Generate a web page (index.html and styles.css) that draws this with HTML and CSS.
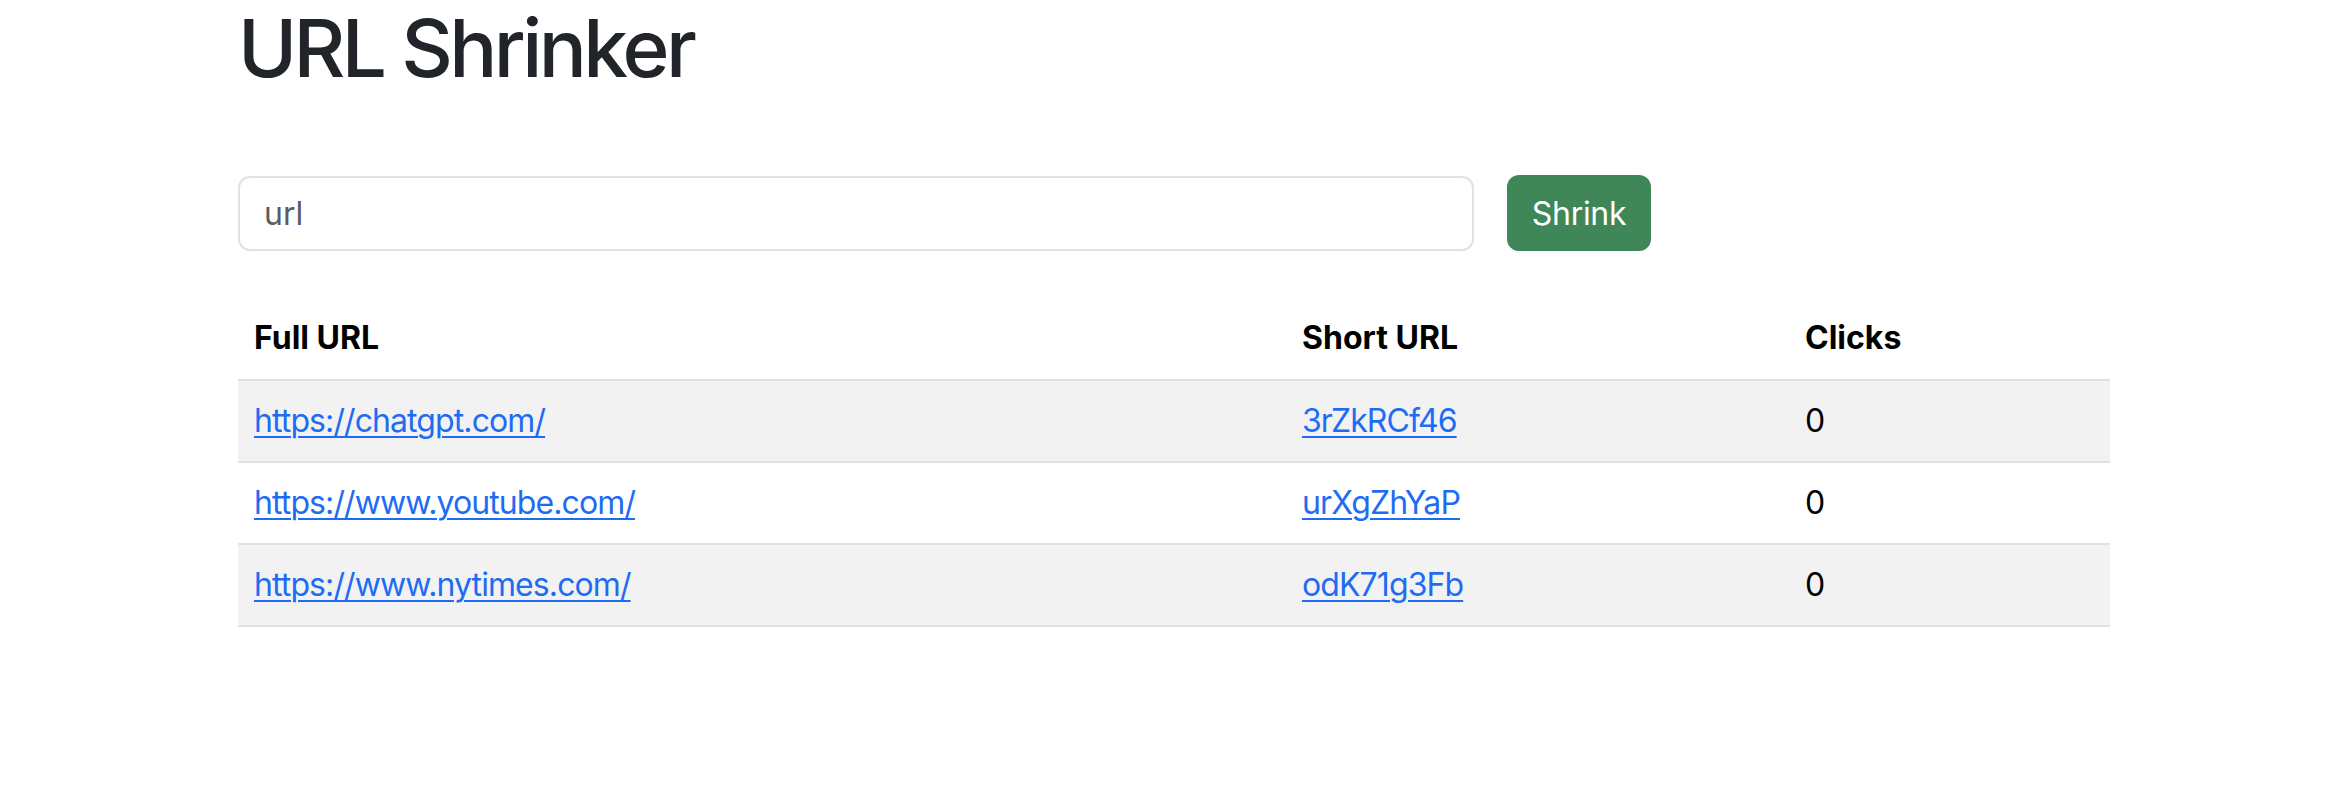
FILE: index.html
```html
<!DOCTYPE html>
<html lang="en">
<head>
<meta charset="utf-8">
<title>URL Shrinker</title>
<link rel="stylesheet" href="styles.css">
</head>
<body>
<div class="container">
  <h1 class="title">URL Shrinker</h1>
  <form class="shrink-form" action="#">
    <input class="url-input" type="url" name="fullUrl" placeholder="url">
    <button class="btn-shrink" type="submit">Shrink</button>
  </form>
  <table class="url-table">
    <colgroup>
      <col class="col-full">
      <col class="col-short">
      <col class="col-clicks">
    </colgroup>
    <thead>
      <tr>
        <th>Full URL</th>
        <th>Short URL</th>
        <th>Clicks</th>
      </tr>
    </thead>
    <tbody>
      <tr>
        <td><a href="#">https://chatgpt.com/</a></td>
        <td><a href="#">3rZkRCf46</a></td>
        <td>0</td>
      </tr>
      <tr>
        <td><a href="#">https://www.youtube.com/</a></td>
        <td><a href="#">urXgZhYaP</a></td>
        <td>0</td>
      </tr>
      <tr>
        <td><a href="#">https://www.nytimes.com/</a></td>
        <td><a href="#">odK71g3Fb</a></td>
        <td>0</td>
      </tr>
    </tbody>
  </table>
</div>
</body>
</html>
```

FILE: styles.css
```css
* {
  box-sizing: border-box;
}

html, body {
  margin: 0;
  padding: 0;
  background: #ffffff;
}

body {
  font-family: Inter, "Noto Sans", "Liberation Sans", sans-serif;
  font-size: 32px;
  line-height: 1.5;
  color: #212529;
}

.container {
  width: 1920px;
  margin: 0 auto;
  padding: 0 24px;
}

.title {
  margin: 0;
  font-size: 80px;
  font-weight: 500;
  line-height: 96px;
  color: #212529;
  letter-spacing: -3.6px;
}

.shrink-form {
  display: flex;
  align-items: center;
  gap: 33px;
  margin: 79px 0 47px;
  width: 1413px;
}

.url-input {
  flex: 1;
  height: 75px;
  padding: 0 24px;
  font-family: inherit;
  font-size: 32px;
  color: #212529;
  background: #fff;
  border: 2px solid #dee2e6;
  border-radius: 12px;
  outline: none;
}

.url-input::placeholder {
  color: #595c5f;
  opacity: 1;
}

.btn-shrink {
  width: 144px;
  height: 76px;
  padding: 0;
  font-family: inherit;
  font-size: 32px;
  letter-spacing: -0.3px;
  color: #fff;
  background: #3f8658;
  border: 2px solid #3f8658;
  border-radius: 12px;
  cursor: pointer;
}

.url-table {
  width: 100%;
  border-collapse: collapse;
  table-layout: fixed;
  color: #000;
}

.col-full { width: 1048px; }
.col-short { width: 503px; }
.col-clicks { width: 321px; }

.url-table th,
.url-table td {
  padding: 16px;
  height: 82px;
  text-align: left;
  vertical-align: top;
  border-bottom: 2px solid #dee2e6;
}

.url-table th {
  font-weight: 700;
}

.url-table td {
  letter-spacing: -0.9px;
}

.url-table tbody tr:nth-child(odd) td {
  background: #f2f2f2;
}

.url-table a {
  color: #1f6cf4;
  text-decoration: underline;
  text-underline-offset: 4px;
  text-decoration-thickness: 2px;
}
```
